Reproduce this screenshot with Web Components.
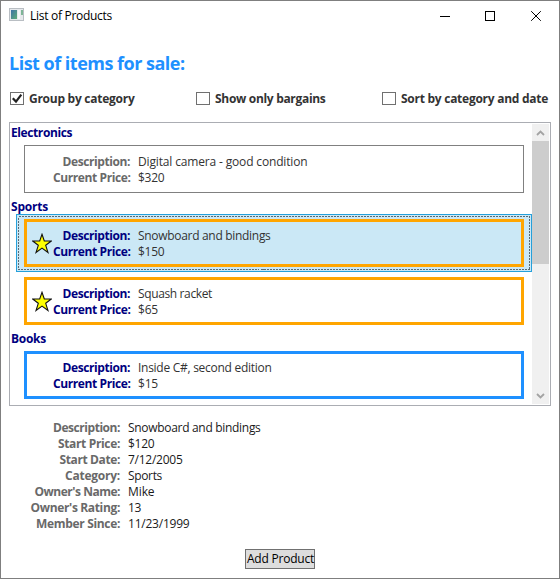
<!DOCTYPE html>
<html lang="en"><head><meta charset="utf-8"><title>List of Products</title>
<style>html,body{margin:0;height:100%;background:#fff}</style></head><body>
<product-window></product-window>
<script>
// Inline text run; letter spacing is tuned so the run takes up the width in "w".
class FitText extends HTMLElement{
  connectedCallback(){
    if(this.shadowRoot)return;
    const r=this.attachShadow({mode:'open'});
    r.innerHTML='<style>:host{display:inline-block;white-space:pre}span{display:inline-block}</style><span><slot></slot></span>';
    const w=+this.getAttribute('w'),n=this.textContent.length,s=r.querySelector('span');
    if(w){const d=(w-s.getBoundingClientRect().width)/n;s.style.letterSpacing=d.toFixed(3)+'px';this.style.width=w+'px';}
  }
}
customElements.define('fit-text',FitText);

const define=(name,html)=>customElements.define(name,class extends HTMLElement{
  connectedCallback(){ if(!this.shadowRoot) this.attachShadow({mode:'open'}).innerHTML=typeof html==='function'?html(this):html; }
});

define('title-bar',`<style>
:host{display:flex;height:29px;align-items:center;padding-left:8px;color:#000}
.t{flex:1;padding-left:6px;line-height:16px}
svg{display:block}.i{margin-bottom:2px}
</style>
<svg class="i" width="15" height="13" viewBox="0 0 15 13" shape-rendering="crispEdges"><defs><linearGradient id="g" x2="1" y2="1"><stop stop-color="#3f72a8"/><stop offset="1" stop-color="#5fae77"/></linearGradient></defs><rect width="15" height="13" fill="#b9bec3"/><rect x="1" y="1" width="13" height="11" fill="#e6e9ec"/><rect x="2" y="2" width="6" height="9" fill="url(#g)"/><rect x="9" y="2" width="2" height="9" fill="#f6f8f9"/><rect x="12" y="2" width="2" height="5" fill="#7db596"/></svg>
<div class="t"><fit-text w="82">List of Products</fit-text></div>
<svg width="129" height="10" viewBox="0 0 129 10" fill="none" stroke="#000" style="margin-right:-10px"><path d="M0 5.500h10M45.500 .5h9v9h-9z" shape-rendering="crispEdges"/><path d="M91.200 .2l9.600 9.600M100.800 .2l-9.600 9.600"/></svg>`);

define('check-option',el=>`<style>
:host{display:flex;align-items:center;height:16px;font-weight:700;color:#333}
i{box-sizing:border-box;width:14px;height:13px;border:1px solid #707070;margin:1px 5px 0 0;background:#fff;flex:none}
svg{display:block}
</style><i>${el.hasAttribute('checked')?'<svg width="12" height="11" viewBox="0 0 12 11"><path d="M1.800 5.200L5 8.600L10.300 1.700" fill="none" stroke="#212121" stroke-width="2.200"/></svg>':''}</i><slot></slot>`);

define('group-header',`<style>:host{box-sizing:border-box;display:block;height:16px;line-height:16px;padding-top:1px;font-weight:700;color:#000080}</style><slot></slot>`);

define('product-card',el=>`<style>
:host{box-sizing:border-box;display:block;height:58px;padding:5px 8px;margin-left:5px;position:relative;--label:#696969}
:host([selected]){background:#cbe8f6;box-shadow:inset 0 0 0 1px #26a0da}
:host([kind]){--label:#000080}
.c{box-sizing:border-box;height:48px;border:1px solid #808080;display:flex;align-items:center;padding-left:8px}
:host([kind=star]) .c{border:3px solid orange;padding-left:6px}
:host([kind=blue]) .c{border:3px solid #1e90ff;padding-left:6px}
.s{width:20px;flex:none}.s svg{display:block;margin-left:-1px}
dl{margin:2px 0 0;display:grid;grid-template-columns:77px auto;column-gap:8px;grid-auto-rows:16px;line-height:16px}
dt{font-weight:700;color:var(--label);text-align:right}dd{margin:0;color:#333}
.f{position:absolute;inset:0;pointer-events:none}
</style>
<div class="c"><div class="s">${el.getAttribute('kind')==='star'?'<svg width="20" height="21" viewBox="0 0 20 21"><path d="M10 1.300L12.300 8H19.300L13.700 12.300L16 19.500L10 15.100L4 19.500L6.300 12.300L.7 8H7.700Z" fill="#ff0" stroke="#111" stroke-width="1.100"/></svg>':''}</div>
<dl><dt><fit-text w="67.500">Description:</fit-text></dt><dd><slot name="d"></slot></dd><dt><fit-text w="77.500">Current Price:</fit-text></dt><dd><slot name="p"></slot></dd></dl></div>
${el.hasAttribute('selected')?'<svg class="f" width="516" height="58"><rect x="2.500" y="2.500" width="511" height="53" fill="none" stroke="#5a6a72" stroke-dasharray="2 1" shape-rendering="crispEdges"/></svg>':''}`);

define('scroll-rail',`<style>:host{display:flex;flex-direction:column;width:17px;background:#f0f0f0}
svg{display:block}.t{height:123px;background:#cdcdcd}.g{flex:1}</style>
<svg width="17" height="17"><path d="M5 11L8.500 7.500L12 11" fill="none" stroke="#a3a3a3" stroke-width="1.800"/></svg><div class="t"></div><div class="g"></div>
<svg width="17" height="17"><path d="M5 7L8.500 10.500L12 7" fill="none" stroke="#a3a3a3" stroke-width="1.800"/></svg>`);

define('product-list',`<style>:host{box-sizing:border-box;display:flex;width:542px;height:284px;border:1px solid #abadb3;padding:1px;background:#fff}
.l{flex:1;min-width:0}</style><div class="l"><slot></slot></div><scroll-rail></scroll-rail>`);

const details=[['Description:',67,'Snowboard and bindings',132.5],['Start Price:',62,'$120',26.5],['Start Date:',60.5,'7/12/2005',54.5],['Category:',55,'Sports',34],["Owner's Name:",85.5,'Mike',26.5],["Owner's Rating:",89.5,'13',13],['Member Since:',84,'11/23/1999',61.5]];
define('product-details',`<style>:host{display:grid;grid-template-columns:111px auto;column-gap:8px;grid-auto-rows:16px;line-height:16px}
b{color:#696969;text-align:right}span{color:#1a1a1a}</style>`+details.map(d=>`<b><fit-text w="${d[1]}">${d[0]}</fit-text></b><span><fit-text w="${d[3]}">${d[2]}</fit-text></span>`).join(''));

define('push-button',`<style>:host{display:block}button{all:unset;box-sizing:border-box;display:block;width:70px;height:20px;border:1px solid #707070;background:#ddd;color:#000;line-height:18px;padding-left:1px}</style><button><slot></slot></button>`);

define('product-window',`<style>
:host{box-sizing:border-box;display:flex;flex-direction:column;width:560px;height:579px;border:1px solid #7f7f7f;background:#fff;font:12px "Open Sans","Noto Sans",sans-serif;overflow:hidden}
h1{margin:21px 0 0 8px;font-size:18px;line-height:24px;color:#1e90ff;font-weight:700}
.o{display:grid;grid-template-columns:186px 186px auto;margin:15px 0 0 9px}
product-list{margin:16px 0 0 8px}
product-details{margin:14px 0 0 8px}
push-button{margin:17px auto 0 244px}
</style>
<title-bar></title-bar>
<h1><fit-text w="175.500">List of items for sale:</fit-text></h1>
<div class="o"><check-option checked><fit-text w="105.500">Group by category</fit-text></check-option><check-option><fit-text w="110.500">Show only bargains</fit-text></check-option><check-option><fit-text w="147">Sort by category and date</fit-text></check-option></div>
<product-list>
<group-header><fit-text w="61">Electronics</fit-text></group-header>
<product-card><fit-text slot="d" w="169.500">Digital camera - good condition</fit-text><fit-text slot="p" w="26.500">$320</fit-text></product-card>
<group-header><fit-text w="37">Sports</fit-text></group-header>
<product-card kind="star" selected><fit-text slot="d" w="132.500">Snowboard and bindings</fit-text><fit-text slot="p" w="26.500">$150</fit-text></product-card>
<product-card kind="star"><fit-text slot="d" w="74">Squash racket</fit-text><fit-text slot="p" w="20">$65</fit-text></product-card>
<group-header><fit-text w="35">Books</fit-text></group-header>
<product-card kind="blue"><fit-text slot="d" w="133.500">Inside C#, second edition</fit-text><fit-text slot="p" w="20">$15</fit-text></product-card>
</product-list>
<product-details></product-details>
<push-button><fit-text w="67">Add Product</fit-text></push-button>`);
</script></body></html>
